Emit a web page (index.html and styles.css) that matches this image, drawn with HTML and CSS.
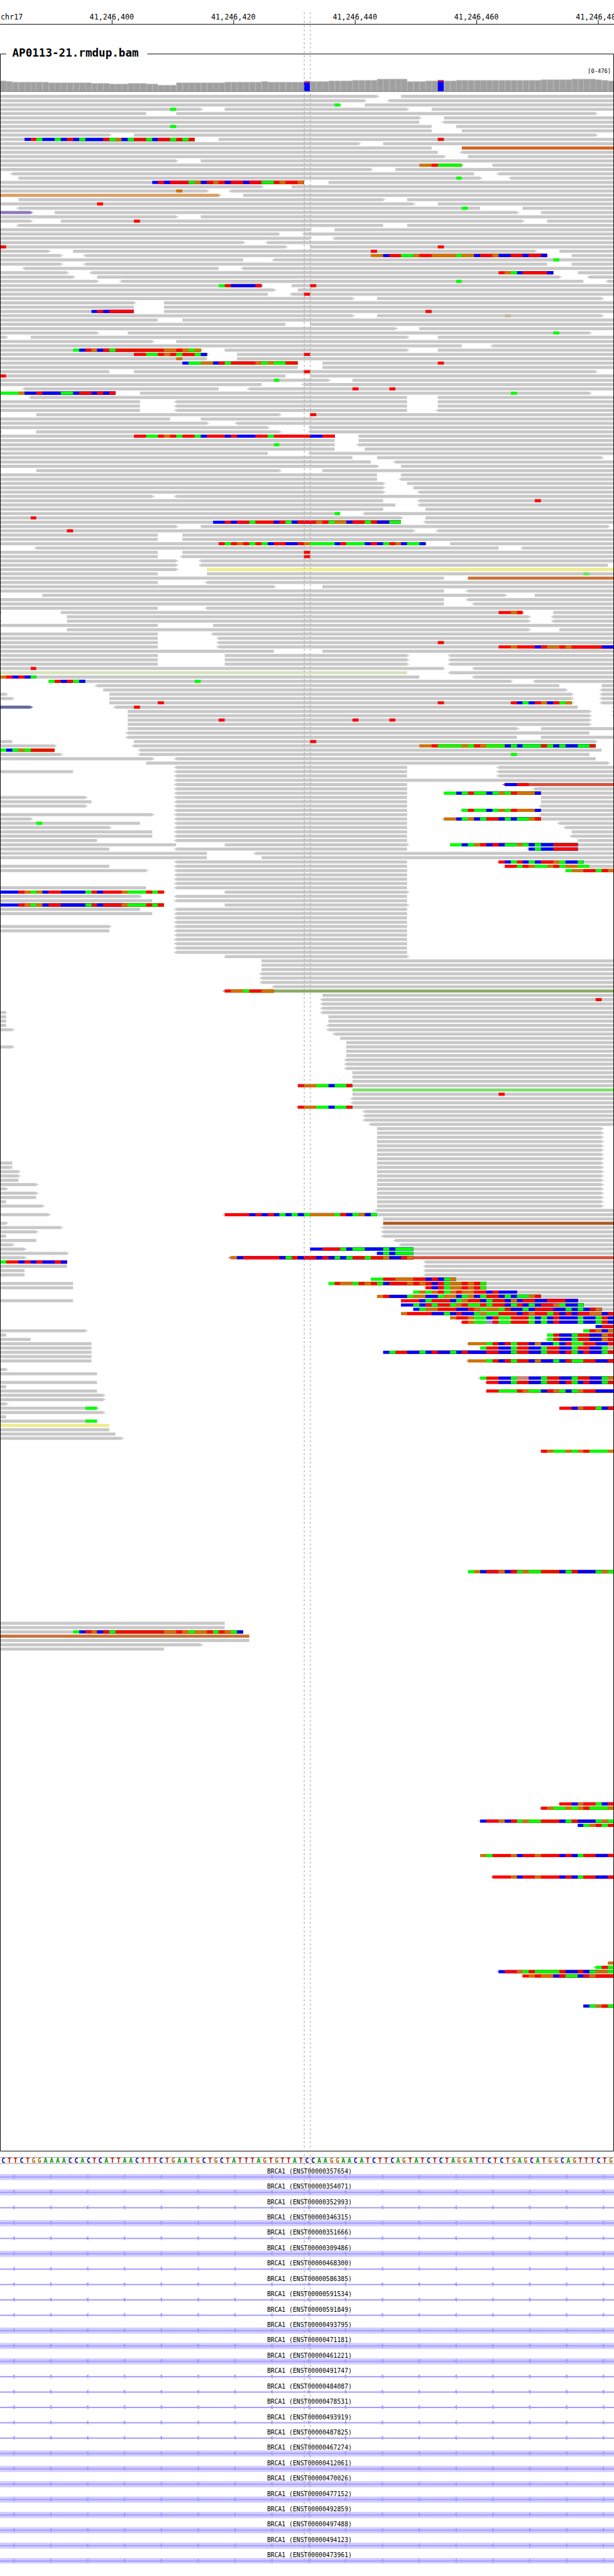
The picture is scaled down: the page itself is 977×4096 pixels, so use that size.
FILE: index.html
```html
<!DOCTYPE html>
<html lang="en">
<head>
<meta charset="utf-8">
<title>chr17 alignments</title>
<link rel="stylesheet" href="styles.css">
</head>
<body>
<main class="browser">
  <svg class="section ruler" viewBox="0 0 1000 60" role="img" aria-label="Genomic ruler">
    <text class="ruler-text" x="1" y="32">chr17</text>
    <g id="ticks"></g>
    <rect class="ink" x="0" y="39" width="1000" height="1"/>
  </svg>
  <svg class="section" viewBox="0 60 1000 3445" role="img" aria-label="Alignments">
    <g id="coverage"></g>
    <g id="reads"></g>
    <path class="frame" d="M10 87.5H.5V3500.5H999.5V87.5H240"/>
    <text class="title" x="20" y="92">AP0113-21.rmdup.bam</text>
    <text class="range" x="995" y="118">[0-476]</text>
  </svg>
  <svg class="section" viewBox="0 3505 1000 20" role="img" aria-label="Reference sequence">
    <rect class="rule" x="0" y="3511" width="1000" height="1"/>
    <rect class="rule" x="0" y="3521" width="1000" height="1"/>
    <g id="sequence"></g>
  </svg>
  <svg class="section" viewBox="0 3525 1000 667" role="img" aria-label="Transcripts">
    <g id="genes"></g>
  </svg>
  <svg class="guides" viewBox="0 0 1000 4192" aria-hidden="true">
    <path d="M495.5 20V4172M505.5 20V4172"/>
  </svg>
</main>
<script src="tracks.js"></script>
</body>
</html>
```
FILE: styles.css
```css
body {
  margin: 0;
  background: #fff;
}

.browser {
  position: relative;
  display: flex;
  flex-direction: column;
  overflow: hidden;
  font-family: "DejaVu Sans Mono", "Liberation Mono", monospace;
}

.section {
  display: block;
  width: 100%;
  height: auto;
}

.guides {
  position: absolute;
  top: 0;
  left: 0;
  width: 100%;
  height: auto;
  pointer-events: none;
}

.guides path {
  fill: none;
  stroke: #969696;
  stroke-width: 1;
  stroke-dasharray: 3 4;
}

.ruler-text,
.tick-text {
  font-size: 12px;
}

.tick-text {
  text-anchor: middle;
}

.title {
  font-size: 18px;
  font-weight: bold;
}

.range {
  font-size: 9px;
  text-anchor: end;
}

.gene-text {
  font-size: 10px;
  text-anchor: middle;
}

.base {
  font-size: 10px;
  font-weight: bold;
  text-anchor: middle;
}

.base-A { fill: #009600; }
.base-C { fill: #000096; }
.base-G { fill: #b4690a; }
.base-T { fill: #b40000; }

.ink { fill: #000; }
.rule { fill: #969696; }

.frame {
  fill: none;
  stroke: #000;
  stroke-width: 1;
}

.cov-edge { fill: #b4b4b4; }
.cov-bar { fill: #a0a0a0; }
.cov-base { fill: #787878; }

.read { fill: #c8c8c8; }
.read-o { fill: #d26424; }
.read-s { fill: #dc9f64; }
.read-p { fill: #8c78be; }
.read-y { fill: #f0eb8c; }
.read-b { fill: #c8733c; }
.read-g { fill: #d7e2be; }
.read-v { fill: #696aa0; }
.read-r { fill: #d7503c; }
.read-e { fill: #8aab64; }
.read-l { fill: #80dc6e; }
.read-n { fill: #aa5a24; }

.mm-A { fill: #0f0; }
.mm-C { fill: #00f; }
.mm-G { fill: #d17105; }
.mm-T { fill: #f00; }
.mm-a { fill: #64e664; }
.mm-c { fill: #8c8cdc; }
.mm-g { fill: #c8b49b; }
.mm-t { fill: #e67878; }

.exon { fill: #d2cdff; }
.strand { fill: #a09bff; }
```
FILE: tracks.js
```js
const BASES = 101;
const VIEW = 1000;
const col = c => Math.round(c * VIEW / BASES);
const rect = (cls, x, y, w, h) => `<rect class="${cls}" x="${x}" y="${y}" width="${w}" height="${h}"/>`;
const put = (id, markup) => { document.getElementById(id).innerHTML = markup; };

/* Ruler */
put('ticks', [['41,246,400', 182], ['41,246,420', 380], ['41,246,440', 578], ['41,246,460', 776], ['41,246,480', 974]]
  .map(([label, x]) => `<text class="tick-text" x="${x}" y="32">${label}</text>` + rect('ink', x, 32, 1, 7)).join(''));

/* Coverage: [number of bases, height] */
const depth = [[1,17],[1,16],[6,15],[7,14],[3,13],[3,12],[3,13],[2,12],[3,10],[8,14],[6,15],[1,16],[6,15],[1,16],
  [3,16],[4,17],[4,18],[5,20],[3,16],[2,17],[1,18],[2,17],[14,18],[5,19],[4,20],[1,19],[1,18],[1,17]]
  .flatMap(([n, h]) => Array(n).fill(h));
const variants = [50, 72];
put('coverage', depth.map((h, i) => {
  const x = col(i), w = col(i + 1) - x, y = 148 - h;
  if (variants.includes(i)) return rect('mm-T', x, y, w, 2) + rect('mm-C', x, y + 2, w, h - 2);
  return rect('cov-edge', x, y, w, h) + rect('cov-bar', x + 1, y + 1, w - 1, h - 1);
}).join('') + rect('cov-base', 0, 148, VIEW, 1));

/* Reads, one line per row. "a-b" is a read from base a to base b (edges by default),
   < and > are strand heads, "x:" a pair colour, "@n" mismatched bases from n.
   "N*" repeats a row, "+N" leaves N rows empty. */
const rows = `
-62> 66-
-60> <64-
-56> 60- @55A
-33> 37-67> 71- @28A
-24 29-98>
-69> 73-
-69 <73-
-71 75- @28A
-71 76-
-18> 22-98>
-32 36- @4CTACCACTCACCCTAGCATTACTTATAT @72T
-59> 63-
-71 o:76-
-72 <76-
-73> 77-
-29> 33-
-76> 81- @69GGTAAAA
-61> 65-
<2-78 <82-
3-79> <84- @75A
-50 54- @25CTCTTTAGCTGTCTTCTTAATGTTG
-43> 48-
-34> <38- @29G
s:-36> 40-
3-63> 67-
-68> 72- @16T
<3-79 86- @76A
p:-5> 9-85> 89-
-29> 33-
-5> 10-86> 90- @22T
<3-63 67-
-51> 55-
-46 <50-
-51> <55-
-40> <44-
-47> 51- @0T @72T
-8> 12-88> 92- @61T
-10> <14-90 94- @61GGCTTAAGTTGGGGAGGCTTGCCTTCTTC
-40 <45- @91A
-10> <14-90 94-
<4-36 <40-
-11> <15-91 95- @82TGACTTTTC
-12> 16-92> <97-
-16> <20-96 <100- @75A
-43> 48- @36ATCCCCT @51T
-45> 49-
-44 <48- @50T
-58> 62-99>
-22> 27-
-22 27-
-22 27- @15CTCTTTT @70T
-58> 62-99> @83g
-26 30-
-47 51-
-65> 69-
-16> 21-97> @91A
-1> 5-67> 72-
-25> 29-
-76 <81-
-33> 37-67> 72- @12ACTGCTATTTTTTTTGGTGAG
-34> 39- @22TTAATGTATTAC @50T
-34 39- @29G
-49 53- @30CAAGGCTATTTTGAGAATT @72T
-49 53-
-18 22-98> @50T
-47 51- @0T
-54> 58- @45A
-43 <50-
<4-36 <41- @58T @64T
-19 23-97> @0AAAGCCTCCCAACTTCTCT @84A
<5-67 72-
2*-23 <29-67 72-
-23 <29-67 <72-
6-46> 51- @51T
-28 33-
-34> <39-
-44> <51-
-0> 6-46> <51-
-55 59- @22TTAATGTATTACTTTCTCCCTTATTTTTTCCTT
-55 59-
-55 <59- @45A
-55 60-
-44 <51-
-58 62-99>
-61 <65-
-62> 66-
6-46> 53-
-62 66-
-62 <66-
-63> 67-
-63> 68-
-63> <69-
-25> <29-
-63 <69- @88T
-65 <69-
-63 70-
-56 <60- @55A
-66> 70- @5T
-66 <70- @35CCTCTTATTTCTACTTTGTAGGCTTATCCAA
-29> 33-100>
-68> <72- @11T
2*-26 30-
-70 74- @36TATGTATACTTCCTGAAAACTAAACTCATGCAAC
<6-82 <86-
-26 30- @50T
-26 <30- @50T
-29> <33-
-29> <33-100
-29> y:34-
-26 34- @96a
-73 b:77-
-26 <34-
-45> 53-
-73 <77-
7-83> 88-
-73 <77-
-73 <78-
-26 <34-
-0> 10-86> 91- @82TTGT
11-87> <91-
-0> 11-87> <91-
-26 35-
11-87> 92-
-26 <35-
-26 <36-
-26 <36- @72T
-26 <36- @82TTGTTTCTGGTGTTTTTCC
-45 53-
3*-26 37-67> <74-
-73 <78- @5T
g:-67 <74-
-69 <78- @0GTCTCA
8-84> <88- @8ATCTAC @32A
<16-92 99-
17-93> <99-
-1> 18-94> <99-
-2> 18-94> <99-
18-94> <99- @26T @72T @84TCACTGCTAG
v:-5> <19-95 <101- @22T
2*21-97> <101-
21-97> @36T @58T @64T
21-97>
21-85> 89-
<21-97
<21-85 89-
-2 22-98> @51T
-9> <22-98 @69GGTAAAAGATGAAACACAAATACACCAAT
-9 <23-99 @0ACAGATTTT
-10> <23-97 @84A
-25> <29-98
24-100>
<29-67 <82-
-12 <29-67 <82-
<29-67 <82-
<29-
<29-67 r:<83- @83CCTT
<29-67 <88-
<29-67 73- @73AACATAACAGATGGGC
-14> <29-67 89-
-15 <29-67 89-
-14> <29-67 <89-
<29-67 <76- @76ATAACAGATGGGC
-25> <29-67 <89-
-5> <29-67 <73- @73GGCAGCATTCACAAGT
-23 <29-67 <92- @6A
-18> <29-67 <93-
-25 <29-67 94-
-25 <29-67 <94-
-16 <29-67 95-
-29 37-67> 74- @74AACAGTCTCAAGACACCTTTT
-18 <29-67 <87- @87CACCTTTT
-34 <42-
-34 43-
<29-67 <82- @82TCATCACTTGACCA
-18 <29-67 83- @83TTATGAAGTAGGAA
-24> <29-67 93- @93AGGTTATG
3*<29-67
-24 <29-67
-27> 37-67> @0CCCTGAGCTTCCCCATCTTTGAAATAT
-23> <29-67
-25 <29-67
-27 37-67> @0CCCTGAGCTTCCCCATCTTTGAAATAT
-23 <29-67
-25 <29-67
2*<29-67
-18> <29-67
-18 <29-67
5*<29-67
37-67>
3*43-
3*<43-
<45-
e:<37- @37TGGATTGG
53-
<53- @98T
2*<53-
-1 <53-
2*-1 54-
-1 <54-
-2> <54-
<55-
56-
57-
-2> 57-
2*57-
3*<57-
3*58-
49- @49TGGAACAAT
l:58-
58- @82T
2*<58-
<49- @49TGGAACAAT
3*<60-
<61-
8*62-99>
2*-2 62-99>
2*-3> 62-99>
-3 62-99>
-6> 62-99>
-1> 62-99>
-6> 62-99>
-6 62-99>
-1 62-99>
-7> 62-99>
<62-
-8> <37- @37TTTTCTCTCACACAGGGGATCAGCA
63-
-1> n:63-
-10> <63-
-6> <63-
-1 <63-
-6 <65-
-2> <66-
-4> 51- @51CCTTTACAACCCACAAA
-11> <62- @62CACAAA
-4> r:<38- @38GCTTTTTTCATCTTCTCACATTATTGCCTG
-11 <70- @0ATTCTCTCCTC
-11 <70-
2*-4 <70-
61- @61AATTGGGTTCTCAG
-12 54- @54ATGGATGTACTTTGTGTCTAGGTGTA
-12 <70- @70TCTAGGTGTA
68- @68AGAGTAGTGGTTCTCCC
62- @62GTCCCAGGCCAGGCAGCATTCACAAGT
-12 66- @66TTTCATTTCAGTTCATTCGCTTCCTTTCC
66- @66CCACTATTAGTAATATTCATCACTTGACCA
68- @68CAGGTTTCCTGAGGATCCACTTTCCACACTG
66- @66GTTTTCCACTCCAGAATTTCTGTTATCTCTTGGCT
74- @74GTTGAACTAATTTACACTCCCACCATC
<76- @76TGAAcTAATTTACACTCCCACCATC
98- @98CTT
-14> 96- @96ATGCG
-1 90- @90ATCCATTCCGT
-5 <90- @90ATCCATTCCGT
-15 77- @77GGGATCTATTCGCCACTAATTCCT
-15 79- @79ATTCCATTCCATTCCATTCCAg
-15 63- @63CATTCCACTCCACTCCCTTCCATTCCATTCTACTCCAT
-15
-15 <77- @77GGGATCTATTCGCCACTAATTCCT
+1
-1>
-16
<79- @79ATTCCAttCCATTCCATTCCAG
-16 <80- @80TTCCATTCCATTCTACTCCAT
-1
-16 80- @80TTAAATGAACTGACAGTTCCC
2*-17>
-1>
-16> 92- @14AA @92TTCGTTACT
-17>
-1
-16 @14AA
y:-18
-18
-19
-20>
+2
89- @89TGAAGAGTAAAG
+27
77- @77AGCTTGCTAGAATTTCATCCCAGA
+11
2*-37
-40 @12ACTGCTATTTTTTTTGGTGAGGTATGAC
b:-41
-41
-33>
-27
+35
<92- @92TTCGTTACT
<89- @89TGAAGAGTAAAG
+2
<79- @79CTTGCTAGAATTTCATCCCAGA
95- @95CAGTAT
+6
79- @79GATTTGCTTGTTTCTCATTCCT
+4
<81- @81TTTGCTTGTTTCTCATTCCT
+19
100- @100G
l:<98- @98ATA
<82- @82CTTGATAAAATCCTCAGGA
y:<86- @86TGTGGCTAACTGTTT
+6
96- @96CAGTA
`.trim().split('\n');

function drawRow(spec, y) {
  return spec.split(' ').map(token => {
    if (token[0] === '@') {
      const [, at, bases] = token.match(/^@(\d+)(\w+)$/);
      const start = +at, end = col(start + bases.length);
      return [...bases].map((b, i) => b === bases[i - 1] ? ''
        : rect('mm-' + b, col(start + i), y, end - col(start + i), 5)).join('');
    }
    const [, hue, left, from, to, right] = token.match(/^(?:(\w):)?(<)?(\d*)-(\d*)(>)?$/);
    const cls = hue ? 'read-' + hue : 'read';
    const a = col(+from), b = col(to === '' ? BASES : +to);
    let out = rect(cls, a, y, b - a, 5);
    if (left) out += `<path class="${cls}" d="M${a} ${y + 1}h-2v1h-2v1h2v1h2z"/>`;
    if (right) out += `<path class="${cls}" d="M${b} ${y + 1}h2v1h2v1h-2v1h-2z"/>`;
    return out;
  }).join('');
}

let y = 154, reads = '';
for (const line of rows) {
  if (line[0] === '+') { y += 7 * line.slice(1); continue; }
  const repeat = line.match(/^(\d+)\*(.*)$/);
  for (let n = repeat ? +repeat[1] : 1; n > 0; n--, y += 7) reads += drawRow(repeat ? repeat[2] : line, y);
}
put('reads', reads);

/* Reference sequence */
const sequence = 'CTTCTGGAAAACCACTCATTAACTTTCTGAATGCTGCTATTTAGTGTTAT'
  + 'CCAAGGAACATCTTCAGTATCTCTAGGATTCTCTGAGCATGGCAGTTTCTG';
put('sequence', [...sequence].map((b, i) =>
  `<text class="base base-${b}" x="${(col(i) + col(i + 1)) / 2}" y="3520">${b}</text>`).join(''));

/* Transcripts: [Ensembl number, drawn as exon] */
const genes = [['357654',1],['354071',1],['352993',0],['346315',1],['351666',0],['309486',1],['468300',0],['586385',0],
  ['591534',0],['591849',0],['493795',1],['471181',1],['461221',1],['491747',0],['484087',0],['478531',0],['493919',0],
  ['487825',0],['467274',1],['412061',1],['470026',1],['477152',1],['492859',1],['497488',1],['494123',1],['473961',1]];
put('genes', genes.map(([id, exon], i) => {
  const top = 3538 + 25 * i;
  let out = exon ? rect('exon', 0, top, VIEW, Math.min(10, 4172 - top)) : '';
  out += rect('strand', 0, top + 4, VIEW, 2);
  for (let x = 24; x < VIEW; x += 60) out += `<path class="strand" d="M${x} ${top + 1}v7h-1v-1h-1v-1h-1v-3h1v-1h1v-1z"/>`;
  return out + `<text class="gene-text" x="504" y="${top - 1}">BRCA1 (ENST00000${id})</text>`;
}).join(''));
```
